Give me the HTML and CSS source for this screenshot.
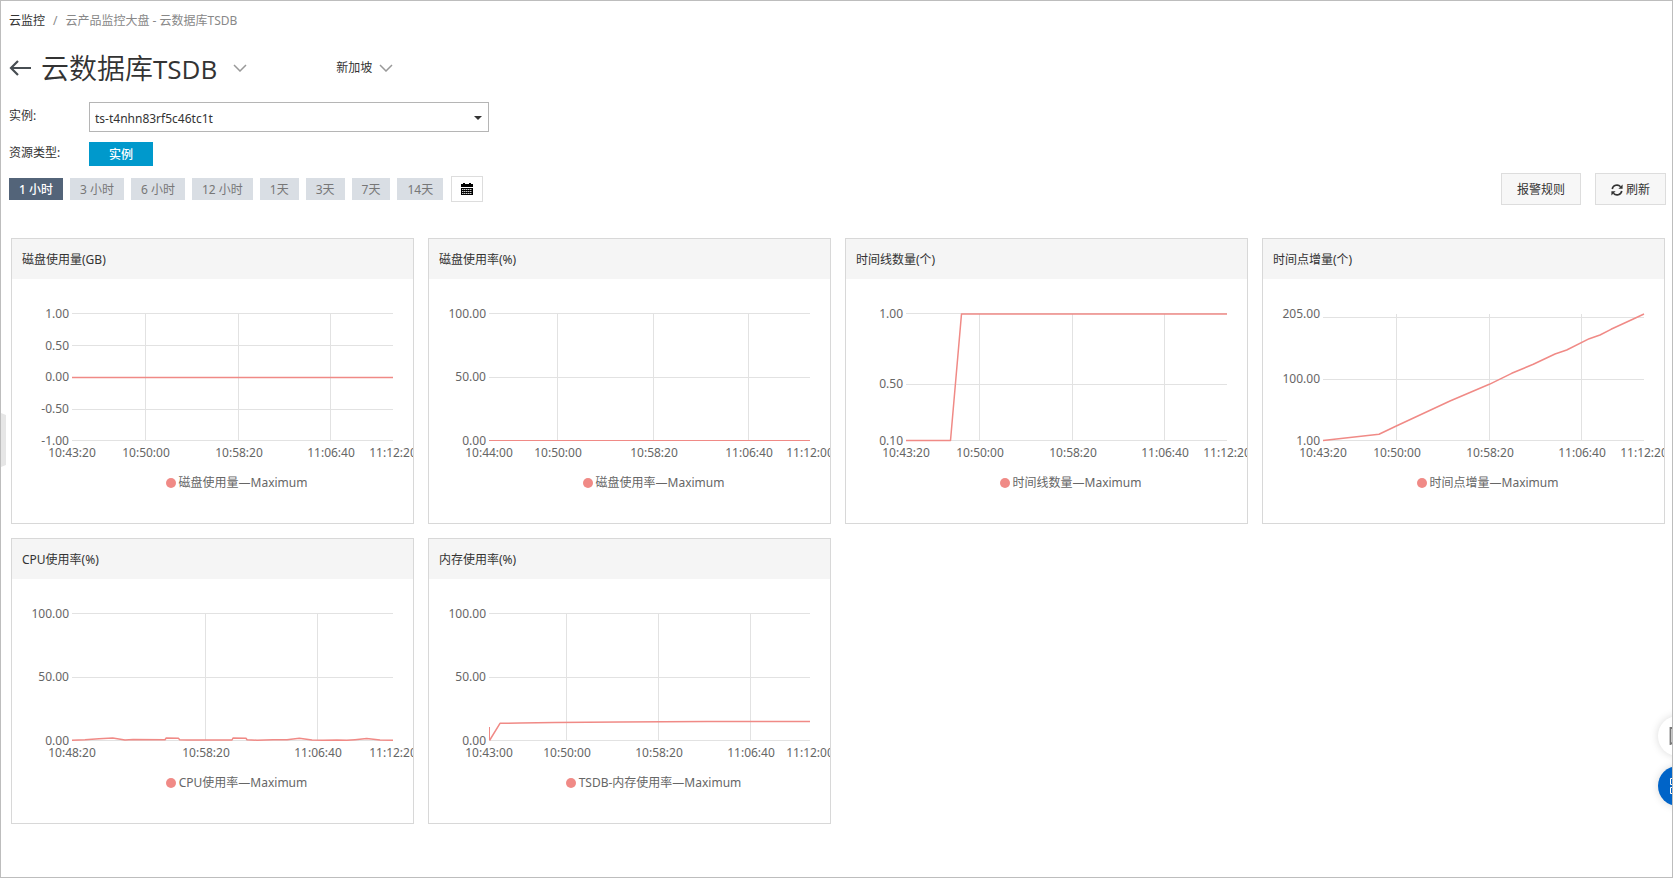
FILE: index.html
```html
<!DOCTYPE html>
<html lang="zh-CN">
<head>
<meta charset="utf-8">
<meta name="viewport" content="width=device-width, initial-scale=1">
<title>云监控 - 云数据库TSDB</title>
<link rel="stylesheet" href="styles.css">
</head>
<body>
<div class="page">
  <nav class="breadcrumb" aria-label="面包屑">
    <a class="breadcrumb-root" href="#">云监控</a>
    <span class="breadcrumb-sep">/</span>
    <span>云产品监控大盘 - 云数据库TSDB</span>
  </nav>

  <header class="heading">
    <a class="back" href="#" aria-label="返回">
      <svg width="22" height="18" viewBox="0 0 22 18"><path d="M9 2 2 9l7 7M2 9h20" fill="none" stroke="#474d52" stroke-width="2.2"/></svg>
    </a>
    <h1 class="title">云数据库<span class="title-latin">TSDB</span></h1>
    <button class="chevron-button" type="button" aria-label="切换产品">
      <svg width="14" height="8" viewBox="0 0 14 8"><path d="m1 1 6 6 6-6" fill="none" stroke="#999" stroke-width="1.5"/></svg>
    </button>
    <button class="region" type="button">新加坡
      <svg width="14" height="8" viewBox="0 0 14 8"><path d="m1 1 6 6 6-6" fill="none" stroke="#999" stroke-width="1.5"/></svg>
    </button>
  </header>

  <div class="field">
    <label class="field-label" for="instance">实例:</label>
    <div class="select-box">
      <select class="select" id="instance"><option>ts-t4nhn83rf5c46tc1t</option></select>
      <svg class="select-caret" width="8" height="4" viewBox="0 0 8 4"><path d="M0 0h8L4 4z" fill="#333"/></svg>
    </div>
  </div>
  <div class="field field-type">
    <span class="field-label">资源类型:</span>
    <button class="type-button" type="button">实例</button>
  </div>

  <div class="toolbar">
    <div class="ranges">
      <button class="range range-active" type="button">1 小时</button>
      <button class="range" type="button">3 小时</button>
      <button class="range" type="button">6 小时</button>
      <button class="range" type="button">12 小时</button>
      <button class="range" type="button">1天</button>
      <button class="range" type="button">3天</button>
      <button class="range" type="button">7天</button>
      <button class="range" type="button">14天</button>
      <button class="calendar" type="button" aria-label="选择日期">
        <svg width="12" height="12" viewBox="0 0 12 12"><path d="M2 0h2v1h4V0h2v1h2v3H0V1h2zM0 5h12v7H0z" fill="#000"/><path d="M1 6.5h10M1 8.5h10M1 10.5h10" stroke="#fff" stroke-width=".8" stroke-dasharray="1.4 .5" fill="none"/></svg>
      </button>
    </div>
    <div class="actions">
      <button class="action" type="button">报警规则</button>
      <button class="action" type="button">
        <svg width="12" height="12" viewBox="0 0 12 12"><path d="M1.2 5A4.9 4.9 0 0 1 9.6 2.7M10.8 7a4.9 4.9 0 0 1-8.4 2.3" fill="none" stroke="#333" stroke-width="1.6"/><path d="M11.6.6v4.2H7.4zM.4 11.4V7.2h4.2z" fill="#333"/></svg>
        刷新</button>
    </div>
  </div>

  <main class="cards">
    <section class="card">
      <h2 class="card-title">磁盘使用量(GB)</h2>
      <svg class="chart" viewBox="0 0 401 190" role="img" aria-label="磁盘使用量">
        <path class="grid" d="M60 34.5h321M60 66.5h321M60 98.5h321M60 130.5h321M60 161.5h321M133.5 34v127M226.5 34v127M318.5 34v127"/>
        <path class="line" d="M60 98.5h321"/>
        <g class="y-axis"><text x="57" y="39">1.00</text><text x="57" y="71">0.50</text><text x="57" y="102">0.00</text><text x="57" y="134">-0.50</text><text x="57" y="166">-1.00</text></g>
        <g class="x-axis"><text x="60" y="178">10:43:20</text><text x="134" y="178">10:50:00</text><text x="227" y="178">10:58:20</text><text x="319" y="178">11:06:40</text><text x="381" y="178">11:12:20</text></g>
      </svg>
      <p class="legend"><span class="dot"></span>磁盘使用量—Maximum</p>
    </section>

    <section class="card">
      <h2 class="card-title">磁盘使用率(%)</h2>
      <svg class="chart" viewBox="0 0 401 190" role="img" aria-label="磁盘使用率">
        <path class="grid" d="M60 34.5h321M60 98.5h321M60 161.5h321M128.5 34v127M224.5 34v127M319.5 34v127"/>
        <path class="line line-thin" d="M60 161.5h321"/>
        <g class="y-axis"><text x="57" y="39">100.00</text><text x="57" y="102">50.00</text><text x="57" y="166">0.00</text></g>
        <g class="x-axis"><text x="60" y="178">10:44:00</text><text x="129" y="178">10:50:00</text><text x="225" y="178">10:58:20</text><text x="320" y="178">11:06:40</text><text x="381" y="178">11:12:00</text></g>
      </svg>
      <p class="legend"><span class="dot"></span>磁盘使用率—Maximum</p>
    </section>

    <section class="card">
      <h2 class="card-title">时间线数量(个)</h2>
      <svg class="chart" viewBox="0 0 401 190" role="img" aria-label="时间线数量">
        <path class="grid" d="M60 34.5h321M60 105.5h321M60 161.5h321M133.5 34v127M226.5 34v127M318.5 34v127"/>
        <path class="line" d="M60 161.5H104.5L115.5 35H381"/>
        <g class="y-axis"><text x="57" y="39">1.00</text><text x="57" y="109">0.50</text><text x="57" y="166">0.10</text></g>
        <g class="x-axis"><text x="60" y="178">10:43:20</text><text x="134" y="178">10:50:00</text><text x="227" y="178">10:58:20</text><text x="319" y="178">11:06:40</text><text x="381" y="178">11:12:20</text></g>
      </svg>
      <p class="legend"><span class="dot"></span>时间线数量—Maximum</p>
    </section>

    <section class="card">
      <h2 class="card-title">时间点增量(个)</h2>
      <svg class="chart" viewBox="0 0 401 190" role="img" aria-label="时间点增量">
        <path class="grid" d="M60 38.5h321M60 100.5h321M60 161.5h321M133.5 35v126M226.5 35v126M318.5 35v126"/>
        <path class="line" d="M60 161.5 116 155.3 133.3 147 187 122 226.3 105.3 248.7 94.3 270.3 85.3 292 75 303.7 71 326.3 59.7 337 56 348 50.3 370.3 40 381 35"/>
        <g class="y-axis"><text x="57" y="39">205.00</text><text x="57" y="104">100.00</text><text x="57" y="166">1.00</text></g>
        <g class="x-axis"><text x="60" y="178">10:43:20</text><text x="134" y="178">10:50:00</text><text x="227" y="178">10:58:20</text><text x="319" y="178">11:06:40</text><text x="381" y="178">11:12:20</text></g>
      </svg>
      <p class="legend"><span class="dot"></span>时间点增量—Maximum</p>
    </section>

    <section class="card">
      <h2 class="card-title">CPU使用率(%)</h2>
      <svg class="chart" viewBox="0 0 401 190" role="img" aria-label="CPU使用率">
        <path class="grid" d="M60 34.5h321M60 98.5h321M60 161.5h321M193.5 34v127M305.5 34v127"/>
        <path class="line" d="M60 161.3 73 160.7 87 159.7 100.7 159 113 161 121 160.4 153 160.7 154.2 159 166.6 159.3 167.5 160.7 175 161 220 161 221 159 234 159.3 235 160.7 245 161.3 261 160.7 275 160.7 287.3 159.2 300 161 311 161.3 325 161 334.7 161.3 343 160.7 354.7 159.6 368 161 381 161.3"/>
        <g class="y-axis"><text x="57" y="39">100.00</text><text x="57" y="102">50.00</text><text x="57" y="166">0.00</text></g>
        <g class="x-axis"><text x="60" y="178">10:48:20</text><text x="194" y="178">10:58:20</text><text x="306" y="178">11:06:40</text><text x="381" y="178">11:12:20</text></g>
      </svg>
      <p class="legend"><span class="dot"></span>CPU使用率—Maximum</p>
    </section>

    <section class="card">
      <h2 class="card-title">内存使用率(%)</h2>
      <svg class="chart" viewBox="0 0 401 190" role="img" aria-label="内存使用率">
        <path class="grid" d="M60 34.5h321M60 98.5h321M60 161.5h321M137.5 34v127M229.5 34v127M321.5 34v127"/>
        <path class="line line-thin" d="M60.5 148V161"/>
        <path class="line" d="M60.5 161.5 71 144.3 91 144 126 143.5 191 143 278 142.5 381 142.4"/>
        <g class="y-axis"><text x="57" y="39">100.00</text><text x="57" y="102">50.00</text><text x="57" y="166">0.00</text></g>
        <g class="x-axis"><text x="60" y="178">10:43:00</text><text x="138" y="178">10:50:00</text><text x="230" y="178">10:58:20</text><text x="322" y="178">11:06:40</text><text x="381" y="178">11:12:00</text></g>
      </svg>
      <p class="legend"><span class="dot"></span>TSDB-内存使用率—Maximum</p>
    </section>
  </main>

  <button class="drawer-handle" type="button" aria-label="展开侧栏"></button>
  <div class="floating">
    <button class="float-button" type="button" aria-label="咨询">
      <svg width="18" height="18" viewBox="0 0 18 18"><path d="M1.5 1h15v14H6l-4.500 2z" fill="none" stroke="#777" stroke-width="1.800"/></svg>
    </button>
    <button class="float-button float-primary" type="button" aria-label="工具">
      <svg width="16" height="16" viewBox="0 0 16 16"><path d="M.5.5h6v6h-6zM9.500.5h6v6h-6zM.5 9.500h6v6h-6zM9.500 9.500h6v6h-6z" fill="none" stroke="#fff"/></svg>
    </button>
  </div>
</div>
</body>
</html>
```
FILE: styles.css
```css
* {
  box-sizing: border-box;
}

body {
  margin: 0;
  font-family: "Noto Sans", "Noto Sans CJK SC", sans-serif;
  font-size: 12px;
  line-height: 20px;
  color: #333;
  background: #fff;
}

button,
select {
  margin: 0;
  padding: 0;
  border: 0;
  border-radius: 0;
  background: none;
  font: inherit;
  color: inherit;
  cursor: pointer;
}

svg {
  display: block;
  flex: none;
}

.page {
  position: relative;
  min-height: 100vh;
  overflow: hidden;
  padding: 10px 6px 20px 8px;
  border: 1px solid #bdbdbd;
}

.breadcrumb {
  display: flex;
  gap: 8px;
  color: #888;
}

.breadcrumb-root {
  color: #333;
  text-decoration: none;
}

.heading {
  display: flex;
  align-items: center;
  height: 42px;
  margin-top: 16px;
}

.title {
  margin: 0 16px 0 10px;
  font-size: 28px;
  font-weight: 350;
  line-height: 42px;
}

.title-latin {
  font-family: "Open Sans", "Noto Sans", sans-serif;
  font-size: 26px;
  font-weight: 400;
}

.region {
  display: flex;
  align-items: center;
  gap: 7px;
  margin-left: 89px;
}

.field {
  display: flex;
  margin-top: 13px;
}

.field-type {
  margin-top: 10px;
}

.field-label {
  flex: none;
  width: 80px;
  margin-top: 4px;
}

.field-type .field-label {
  margin-top: 1px;
}

.select-box {
  position: relative;
  flex: 0 1 400px;
}

.select {
  width: 100%;
  height: 30px;
  padding: 3px 24px 0 5px;
  border: 1px solid #b5b5b5;
  appearance: none;
  background: #fff;
}

.select-caret {
  position: absolute;
  top: 14px;
  right: 7px;
  pointer-events: none;
}

.type-button {
  width: 64px;
  height: 24px;
  padding-top: 1px;
  background: #0099cc;
  color: #fff;
  font-weight: 500;
}

.toolbar {
  display: flex;
  justify-content: space-between;
  align-items: center;
  margin-top: 7px;
}

.ranges {
  display: flex;
  align-items: center;
  gap: 7px;
}

.range {
  height: 22px;
  padding: 1px 10px 0;
  background: #d9dee4;
  color: #777;
  white-space: nowrap;
}

.range-active {
  background: #536479;
  color: #fff;
  font-weight: 500;
}

.calendar {
  display: grid;
  place-items: center;
  width: 32px;
  height: 26px;
  margin-left: 1px;
  border: 1px solid #ddd;
}

.actions {
  display: flex;
  gap: 14px;
}

.action {
  display: flex;
  align-items: center;
  gap: 3px;
  height: 32px;
  padding: 1px 15px 0;
  border: 1px solid #ddd;
  background: #f7f7f7;
}

.cards {
  display: grid;
  grid-template-columns: repeat(4, minmax(0, 1fr));
  gap: 14px;
  margin: 33px 1px 0 2px;
}

.card {
  overflow: hidden;
  padding-bottom: 30px;
  border: 1px solid #d8d8d8;
}

.card-title {
  height: 40px;
  margin: 0;
  padding: 0 10px;
  background: #f5f5f5;
  font-size: 12px;
  font-weight: 400;
  line-height: 42px;
}

.chart {
  width: 100%;
  height: auto;
}

.grid {
  fill: none;
  stroke: #e2e2e2;
}

.line {
  fill: none;
  stroke: #f08a86;
  stroke-width: 1.5;
  stroke-linejoin: round;
}

.line-thin {
  stroke-width: 1;
}

.x-axis,
.y-axis {
  fill: #666;
  font-size: 12px;
}

.x-axis {
  text-anchor: middle;
}

.y-axis {
  text-anchor: end;
}

.legend {
  display: flex;
  justify-content: center;
  align-items: center;
  gap: 3px;
  height: 24px;
  margin: 0;
  padding: 4px 0 0 48px;
  color: #666;
}

.dot {
  width: 10px;
  height: 10px;
  border-radius: 50%;
  background: #f08a86;
}

.drawer-handle {
  position: absolute;
  top: 50%;
  left: 0;
  width: 5px;
  height: 54px;
  margin-top: -26px;
  background: #e6e6e6;
  clip-path: polygon(0 0, 100% 2px, 100% 52px, 0 100%);
}

.floating {
  position: absolute;
  right: -26px;
  bottom: 71px;
  display: grid;
  gap: 10px;
}

.float-button {
  display: grid;
  place-items: center;
  width: 40px;
  height: 40px;
  border-radius: 50%;
  background: #fff;
  box-shadow: 0 0 8px rgba(0, 0, 0, 0.15);
}

.float-primary {
  background: #0064c8;
}
```
